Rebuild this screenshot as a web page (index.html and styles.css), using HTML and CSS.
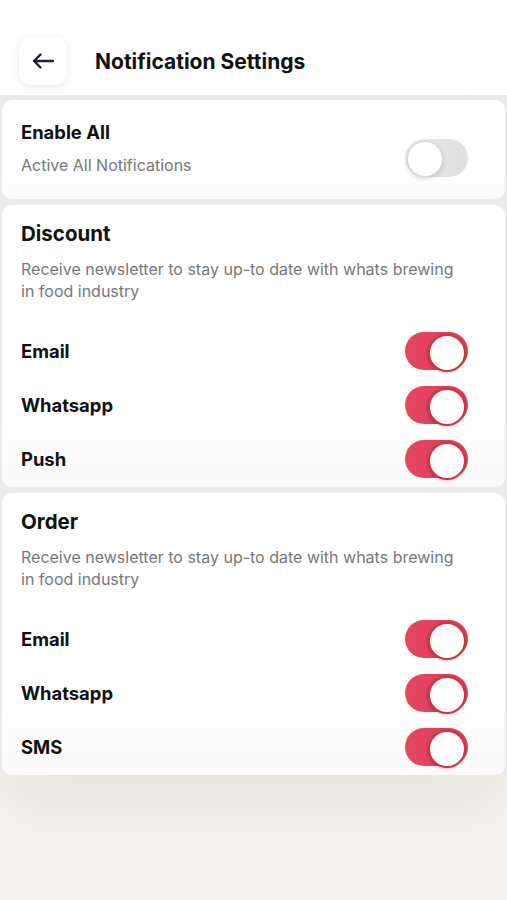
FILE: index.html
```html
<!DOCTYPE html>
<html lang="en">
<head>
    <meta charset="UTF-8">
    <meta name="viewport" content="width=device-width, initial-scale=1.0">
    <title>Notification Settings</title>
    <link rel="stylesheet" href="styles.css">
</head>
<body>
    <!-- 顶部 -->
    <div class="header">
        <a href="javascript:;" class="back">
            <svg width="22" height="16" viewBox="0 0 22 16">
                <path d="M21 8H2M8.5 1.5L2 8l6.5 6.5" fill="none" stroke="#1d2430" stroke-width="2.4" stroke-linecap="round" stroke-linejoin="round"/>
            </svg>
        </a>
        <h1>Notification Settings</h1>
    </div>
    <div class="list">
        <!-- 全部开启 -->
        <div class="card card-all">
            <div class="all-text">
                <div class="label">Enable All</div>
                <div class="sub">Active All Notifications</div>
            </div>
            <span class="switch"></span>
        </div>
        <!-- Discount -->
        <div class="card">
            <h2>Discount</h2>
            <p class="desc">Receive newsletter to stay up-to date with whats brewing in food industry</p>
            <ul class="rows">
                <li><span class="label">Email</span><span class="switch on"></span></li>
                <li><span class="label">Whatsapp</span><span class="switch on"></span></li>
                <li><span class="label">Push</span><span class="switch on"></span></li>
            </ul>
        </div>
        <!-- Order -->
        <div class="card">
            <h2>Order</h2>
            <p class="desc">Receive newsletter to stay up-to date with whats brewing in food industry</p>
            <ul class="rows">
                <li><span class="label">Email</span><span class="switch on"></span></li>
                <li><span class="label">Whatsapp</span><span class="switch on"></span></li>
                <li><span class="label">SMS</span><span class="switch on"></span></li>
            </ul>
        </div>
    </div>
</body>
</html>
```
FILE: styles.css
```css
* {
    margin: 0;
    padding: 0;
    box-sizing: border-box;
}
li {
    list-style: none;
}
body {
    font-family: "Inter", "Open Sans", sans-serif;
    background-color: #f6f3ef;
    color: #111;
    min-height: 900px;
}
.header {
    display: flex;
    align-items: center;
    height: 95px;
    padding: 37px 0 10px 19px;
    background-color: #fff;
}
.back {
    display: flex;
    align-items: center;
    justify-content: center;
    width: 48px;
    height: 48px;
    border-radius: 12px;
    background-color: #fff;
    box-shadow: 0 2px 8px rgba(0, 0, 0, .09);
}
.header h1 {
    margin-left: 28px;
    font-size: 21px;
    font-weight: 700;
    color: #111;
}
.list {
    display: flex;
    flex-direction: column;
    gap: 6px;
    padding: 5px 2px 0;
    background-color: #ebebe9;
    box-shadow: 0 40px 60px rgba(0, 0, 0, .05);
}
.card {
    padding: 17px 19px 1px;
    border-radius: 10px;
    background: linear-gradient(#fff 75%, #f9f9f9);
}
.card-all {
    display: flex;
    align-items: center;
    justify-content: space-between;
    height: 99px;
    padding-bottom: 0;
}
.label {
    font-size: 18.4px;
    font-weight: 700;
    color: #111;
}
.all-text .label {
    line-height: 22px;
    margin-top: -20px;
}
.sub {
    margin-top: 11px;
    font-size: 16px;
    line-height: 22px;
    color: #777;
}
.card h2 {
    font-size: 20.5px;
    line-height: 24px;
    font-weight: 700;
    color: #111;
}
.desc {
    margin-top: 12px;
    padding-right: 25px;
    font-size: 16px;
    line-height: 22px;
    color: #777;
}
.rows {
    margin-top: 22px;
}
.rows li {
    display: flex;
    align-items: center;
    justify-content: space-between;
    height: 54px;
}
.switch {
    position: relative;
    flex-shrink: 0;
    width: 63px;
    height: 38px;
    margin-right: 18px;
    border-radius: 19px;
    background: linear-gradient(90deg, #eaeaea, #dedede);
}
.switch::after {
    content: "";
    position: absolute;
    top: 2px;
    left: 2px;
    width: 34px;
    height: 34px;
    border-radius: 50%;
    background-color: #fff;
    border: 1px solid #d6d6d6;
    box-shadow: 0 2px 4px rgba(0, 0, 0, .15);
}
.switch.on {
    background: linear-gradient(90deg, #e54760, #df3a53);
}
.switch.on::after {
    left: auto;
    right: 2px;
    border: 2px solid #d2324b;
    box-shadow: -1px 1px 3px rgba(0, 0, 0, .2);
}
```
